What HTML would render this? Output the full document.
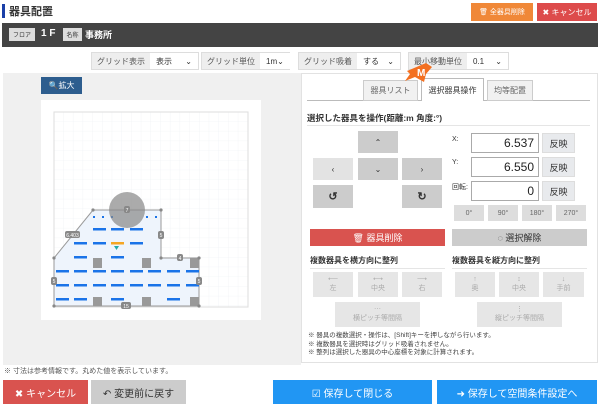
<!DOCTYPE html>
<html><head><meta charset="utf-8">
<style>
*{box-sizing:border-box;margin:0;padding:0}
body{width:600px;height:407px;background:#fff;font-family:"Liberation Sans","Noto Sans CJK JP",sans-serif;position:relative;overflow:hidden;color:#333}
.a{position:absolute}
.btn{position:absolute;display:flex;align-items:center;justify-content:center;font-size:8px;white-space:nowrap}
.g{background:#ccc;color:#333}
.lg{background:#e6e6e6;color:#aaa;flex-direction:column;line-height:1.2}
.f{position:absolute;top:52px;height:18px;display:flex;font-size:8px;border:1px solid #ddd;white-space:nowrap}
.f .l{background:#eee;color:#555;padding:0 5px;display:flex;align-items:center}
.f .s{background:#fff;display:flex;align-items:center;padding:0 6px;justify-content:space-between}
.inp{position:absolute;left:471px;width:68px;height:20px;border:1px solid #aaa;background:#fff;font-size:12px;text-align:right;padding-right:4px;line-height:19px;color:#222}
.ref{position:absolute;left:542px;width:33px;height:20px;background:#e8eaed;border:1px solid #ddd;font-size:9px;display:flex;align-items:center;justify-content:center}
.deg{position:absolute;top:205px;width:30px;height:16px;background:#ddd;font-size:7px;display:flex;align-items:center;justify-content:center;color:#666}
</style></head><body>
<div class="a" style="left:2px;top:4px;width:3px;height:14px;background:#1a3fa8"></div>
<div class="a" style="left:9px;top:3px;font-size:11px;font-weight:bold">器具配置</div>
<div class="btn" style="left:471px;top:3px;width:62px;height:18px;background:#f08838;color:#fff;font-size:7px">🗑 全器具削除</div>
<div class="btn" style="left:537px;top:3px;width:60px;height:18px;background:#dd4b4b;color:#fff;font-size:8px">✖ キャンセル</div>
<div class="a" style="left:2px;top:23px;width:596px;height:24px;background:#444"></div>
<div class="btn" style="left:9px;top:28px;width:26px;height:13px;background:#ddd;color:#333;font-size:6px">フロア</div>
<div class="a" style="left:41px;top:28px;color:#fff;font-size:10px;font-weight:bold">1 F</div>
<div class="btn" style="left:63px;top:28px;width:19px;height:13px;background:#ddd;color:#333;font-size:6px">名称</div>
<div class="a" style="left:85px;top:28px;color:#fff;font-size:9px;font-weight:bold">事務所</div>

<div class="f" style="left:91px;width:108px"><div class="l">グリッド表示</div><div class="s" style="flex:1">表示<span>⌄</span></div></div>
<div class="f" style="left:201px;width:89px"><div class="l">グリッド単位</div><div class="s" style="flex:1">1m<span>⌄</span></div></div>
<div class="f" style="left:298px;width:103px"><div class="l">グリッド吸着</div><div class="s" style="flex:1">する<span>⌄</span></div></div>
<div class="f" style="left:408px;width:101px"><div class="l">最小移動単位</div><div class="s" style="flex:1">0.1<span>⌄</span></div></div>

<div class="a" style="left:3px;top:73px;width:298px;height:292px;background:#f0f0f0"></div>
<div class="btn" style="left:41px;top:77px;width:41px;height:17px;background:#2d5d8e;color:#fff;font-size:8px">🔍拡大</div>
<div class="a" style="left:41px;top:100px;width:220px;height:220px;background:#fff"></div>
<svg class="a" style="left:0;top:0" width="300" height="407">
<defs><pattern id="gp" x="54" y="112" width="9.7" height="9.7" patternUnits="userSpaceOnUse"><path d="M9.7 0V9.7H0" fill="none" stroke="#eceff3" stroke-width="0.6"/></pattern></defs>
<rect x="54" y="112" width="194" height="195" fill="url(#gp)" stroke="#ddd"/>
<polygon points="93,210 161,210 161,258 199,258 199,306 54,306 54,258" fill="#eef4fc" stroke="#999" stroke-width="1"/>
<g fill="#1a73e8">
<rect x="93" y="228" width="13" height="2.5"/><rect x="111" y="228" width="13" height="2.5"/><rect x="130" y="228" width="13" height="2.5"/>
<rect x="74" y="242" width="13" height="2.5"/><rect x="93" y="242" width="13" height="2.5"/><rect x="130" y="242" width="13" height="2.5"/>
<rect x="74" y="256" width="13" height="2.5"/><rect x="111" y="256" width="13" height="2.5"/>
<rect x="56" y="270" width="13" height="2.5"/><rect x="74" y="270" width="13" height="2.5"/><rect x="93" y="270" width="13" height="2.5"/><rect x="111" y="270" width="13" height="2.5"/><rect x="130" y="270" width="13" height="2.5"/><rect x="148" y="270" width="13" height="2.5"/><rect x="167" y="270" width="13" height="2.5"/><rect x="186" y="270" width="13" height="2.5"/>
<rect x="56" y="284" width="13" height="2.5"/><rect x="74" y="284" width="13" height="2.5"/><rect x="93" y="284" width="13" height="2.5"/><rect x="111" y="284" width="13" height="2.5"/><rect x="130" y="284" width="13" height="2.5"/><rect x="148" y="284" width="13" height="2.5"/><rect x="167" y="284" width="13" height="2.5"/><rect x="186" y="284" width="13" height="2.5"/>
<rect x="56" y="298" width="13" height="2.5"/><rect x="74" y="298" width="13" height="2.5"/><rect x="111" y="298" width="13" height="2.5"/><rect x="167" y="298" width="13" height="2.5"/>
<rect x="93" y="216" width="2" height="2"/><rect x="102" y="216" width="2" height="2"/><rect x="111" y="216" width="2" height="2"/><rect x="146" y="216" width="2" height="2"/><rect x="155" y="216" width="2" height="2"/>
</g>
<rect x="111" y="242" width="13" height="2.5" fill="#f5a623"/>
<path d="M114 246h5l-2.5 4z" fill="#2aa"/>
<g fill="#999"><rect x="93" y="258" width="9" height="10"/><rect x="142" y="258" width="9" height="10"/><rect x="190" y="258" width="9" height="10"/><rect x="93" y="297" width="9" height="9"/><rect x="142" y="297" width="9" height="9"/><rect x="190" y="297" width="9" height="9"/></g>
<circle cx="127" cy="210" r="18" fill="#888" fill-opacity="0.7"/>
<g fill="#888"><circle cx="93" cy="210" r="1.6"/><circle cx="161" cy="210" r="1.6"/><circle cx="161" cy="258" r="1.6"/><circle cx="199" cy="258" r="1.6"/><circle cx="199" cy="306" r="1.6"/><circle cx="54" cy="306" r="1.6"/><circle cx="54" cy="258" r="1.6"/></g>
<g fill="#888"><rect x="65" y="231" width="15" height="7" rx="2"/><rect x="158" y="231" width="6" height="8" rx="2"/><rect x="177" y="254" width="6" height="7" rx="2"/><rect x="51" y="277" width="6" height="8" rx="2"/><rect x="196" y="277" width="6" height="8" rx="2"/><rect x="121" y="302" width="10" height="7" rx="2"/><rect x="124" y="206" width="6" height="7" rx="2"/></g>
<g fill="#fff" font-size="5" text-anchor="middle"><text x="72.5" y="237">6.403</text><text x="161" y="237">5</text><text x="180" y="260">4</text><text x="54" y="283">5</text><text x="199" y="283">5</text><text x="126" y="308">15</text><text x="127" y="212">7</text></g>
</svg>
<div class="a" style="left:4px;top:366px;font-size:7px;color:#555">※ 寸法は参考情報です。丸めた値を表示しています。</div>

<div class="a" style="left:301px;top:73px;width:297px;height:290px;background:#fff;border:1px solid #e2e2e2"></div>
<div class="a" style="left:307px;top:100px;width:283px;height:1px;background:#bbb"></div>
<div class="btn" style="left:363px;top:80px;width:55px;height:21px;background:#f1f1f1;border:1px solid #ccc;color:#666">器具リスト</div>
<div class="btn" style="left:421px;top:78px;width:63px;height:23px;background:#fff;border:1px solid #bbb;border-bottom:none;color:#333">選択器具操作</div>
<div class="btn" style="left:487px;top:80px;width:46px;height:21px;background:#f1f1f1;border:1px solid #ccc;color:#666">均等配置</div>
<svg class="a" style="left:404px;top:61px" width="30" height="22"><path d="M3 10 L22 2 L28 6 L22 13 L20 21 L11 16 L1 20 L6 13Z" fill="#f37021"/><text x="13" y="15" fill="#fff" font-size="10" font-weight="bold" font-family="Liberation Sans">M</text></svg>
<div class="a" style="left:307px;top:112px;font-size:8.5px;font-weight:bold">選択した器具を操作(距離:m 角度:°)</div>
<div class="a" style="left:307px;top:125px;width:283px;height:1px;background:#e5e5e5"></div>
<div class="btn g" style="left:358px;top:131px;width:40px;height:22px">⌃</div>
<div class="btn" style="left:313px;top:158px;width:40px;height:22px;background:#e3e3e3">‹</div>
<div class="btn g" style="left:358px;top:158px;width:40px;height:22px">⌄</div>
<div class="btn g" style="left:402px;top:158px;width:40px;height:22px">›</div>
<div class="btn g" style="left:313px;top:185px;width:40px;height:23px;font-size:11px;font-weight:bold">↺</div>
<div class="btn g" style="left:402px;top:185px;width:40px;height:23px;font-size:11px;font-weight:bold">↻</div>
<div class="a" style="left:452px;top:136px;font-size:7px">X:</div>
<div class="inp" style="top:133px">6.537</div><div class="ref" style="top:133px">反映</div>
<div class="a" style="left:452px;top:159px;font-size:7px">Y:</div>
<div class="inp" style="top:157px">6.550</div><div class="ref" style="top:157px">反映</div>
<div class="a" style="left:452px;top:182px;font-size:7px">回転:</div>
<div class="inp" style="top:181px">0</div><div class="ref" style="top:181px">反映</div>
<div class="deg" style="left:454px">0°</div><div class="deg" style="left:488px">90°</div><div class="deg" style="left:522px">180°</div><div class="deg" style="left:556px">270°</div>
<div class="btn" style="left:310px;top:229px;width:135px;height:17px;background:#d9534f;color:#fff;font-size:9px">🗑 器具削除</div>
<div class="btn" style="left:452px;top:229px;width:135px;height:17px;background:#ccc;color:#333;font-size:9px">◌ 選択解除</div>
<div class="a" style="left:310px;top:255px;font-size:8px;font-weight:bold">複数器具を横方向に整列</div>
<div class="a" style="left:452px;top:255px;font-size:8px;font-weight:bold">複数器具を縦方向に整列</div>
<div class="a" style="left:310px;top:268px;width:135px;height:1px;background:#e5e5e5"></div>
<div class="a" style="left:452px;top:268px;width:135px;height:1px;background:#e5e5e5"></div>
<div class="btn lg" style="left:313px;top:272px;width:40px;height:25px;font-size:7px"><span>⟵</span>左</div>
<div class="btn lg" style="left:358px;top:272px;width:40px;height:25px;font-size:7px"><span>⟷</span>中央</div>
<div class="btn lg" style="left:402px;top:272px;width:40px;height:25px;font-size:7px"><span>⟶</span>右</div>
<div class="btn lg" style="left:455px;top:272px;width:40px;height:25px;font-size:7px"><span>↑</span>奥</div>
<div class="btn lg" style="left:499px;top:272px;width:40px;height:25px;font-size:7px"><span>↕</span>中央</div>
<div class="btn lg" style="left:543px;top:272px;width:41px;height:25px;font-size:7px"><span>↓</span>手前</div>
<div class="btn lg" style="left:335px;top:302px;width:85px;height:25px;font-size:7px"><span>⋯</span>横ピッチ等間隔</div>
<div class="btn lg" style="left:477px;top:302px;width:85px;height:25px;font-size:7px"><span>⋮</span>縦ピッチ等間隔</div>
<div class="a" style="left:308px;top:332px;font-size:6.5px;line-height:8.5px;color:#444">※ 器具の複数選択・操作は、[Shift]キーを押しながら行います。<br>※ 複数器具を選択時はグリッド吸着されません。<br>※ 整列は選択した器具の中心座標を対象に計算されます。</div>

<div class="btn" style="left:3px;top:380px;width:85px;height:24px;background:#d9534f;color:#fff;font-size:10px">✖ キャンセル</div>
<div class="btn" style="left:91px;top:380px;width:95px;height:24px;background:#ccc;color:#333;font-size:10px">↶ 変更前に戻す</div>
<div class="btn" style="left:273px;top:380px;width:159px;height:24px;background:#2196f3;color:#fff;font-size:10px">☑ 保存して閉じる</div>
<div class="btn" style="left:437px;top:380px;width:160px;height:24px;background:#2196f3;color:#fff;font-size:10px">➜ 保存して空間条件設定へ</div>
</body></html>
